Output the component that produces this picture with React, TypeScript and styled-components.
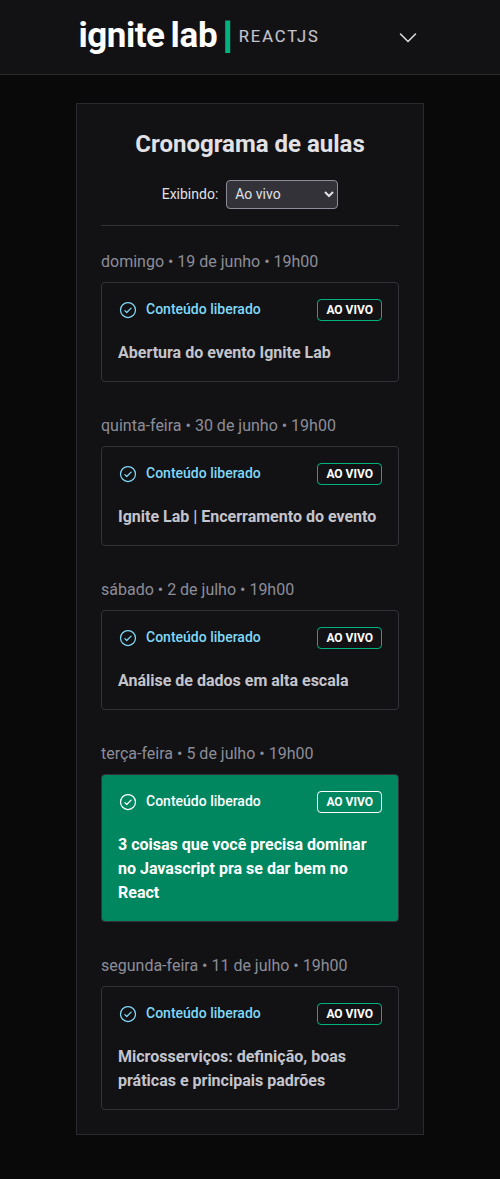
import React from "react";
import styled, { createGlobalStyle, css } from "styled-components";
import { PiCaretDown, PiCheckCircle } from "react-icons/pi";

const GlobalStyle = createGlobalStyle`
  *, *::before, *::after { box-sizing: border-box; margin: 0; padding: 0; }
  body {
    background: #09090a;
    color: #e1e1e6;
    font-family: Roboto, sans-serif;
    font-size: 16px;
    line-height: 24px;
  }
`;

const Page = styled.div`
  min-height: 1179px;
`;

const Header = styled.header`
  display: flex;
  align-items: center;
  justify-content: space-between;
  height: 75px;
  padding: 0 80px 0 76px;
  background: #121214;
  border-bottom: 1px solid #29292e;
`;

const Brand = styled.div`
  display: flex;
  align-items: center;
`;

const Logo = styled.svg`
  display: block;
  width: 248px;
  height: 48px;
  overflow: visible;
`;

const MenuButton = styled.button`
  display: flex;
  border: 0;
  background: transparent;
  color: #e1e1e6;
`;

const Panel = styled.main`
  width: 348px;
  margin: 28px auto 44px;
  padding: 24px;
  background: #121214;
  border: 1px solid #29292e;
`;

const Title = styled.h1`
  font-size: 24px;
  line-height: 32px;
  font-weight: 700;
  text-align: center;
`;

const Filter = styled.label`
  display: flex;
  align-items: center;
  justify-content: center;
  gap: 8px;
  margin-top: 20px;
  padding-bottom: 16px;
  border-bottom: 1px solid #323238;
  font-size: 14px;
  line-height: 20px;
`;

const FilterName = styled.span`
  padding-bottom: 2px;
`;

const Select = styled.select`
  width: 112px;
  height: 29px;
  padding: 0 4px 2px;
  background: #323238;
  border: 1px solid #8d8d99;
  border-radius: 4px;
  color: #e1e1e6;
  font: 14px/20px Roboto, sans-serif;
`;

const Lessons = styled.div`
  display: flex;
  flex-direction: column;
  gap: 32px;
  margin-top: 24px;
`;

const LessonDate = styled.time`
  display: block;
  color: #8d8d99;
`;

const Status = styled.span`
  display: flex;
  align-items: center;
  gap: 8px;
  padding-bottom: 2px;
  color: #81d8f7;
  font-size: 14px;
  line-height: 20px;
  font-weight: 500;

  svg { margin-top: 2px; }
`;

const Badge = styled.span`
  height: 22px;
  padding: 0 8px;
  border: 1px solid #00b37e;
  border-radius: 4px;
  color: #fff;
  font-size: 12px;
  line-height: 20px;
  font-weight: 700;
`;

const LessonTitle = styled.strong`
  display: block;
  margin-top: 20px;
  color: #c4c4cc;
  font-weight: 700;
`;

const Card = styled.article<{ $active?: boolean }>`
  margin-top: 8px;
  padding: 16px;
  border: 1px solid #323238;
  border-radius: 4px;

  ${({ $active }) =>
    $active &&
    css`
      background: #00875f;
      ${Status}, ${LessonTitle} { color: #fff; }
      ${Badge} { border-color: #fff; }
    `}
`;

const CardHeader = styled.header`
  display: flex;
  align-items: center;
  justify-content: space-between;
  height: 22px;
`;

const lessons = [
  { date: "domingo • 19 de junho • 19h00", title: "Abertura do evento Ignite Lab" },
  { date: "quinta-feira • 30 de junho • 19h00", title: "Ignite Lab | Encerramento do evento" },
  { date: "sábado • 2 de julho • 19h00", title: "Análise de dados em alta escala" },
  {
    date: "terça-feira • 5 de julho • 19h00",
    title: "3 coisas que você precisa dominar no Javascript pra se dar bem no React",
    active: true,
  },
  { date: "segunda-feira • 11 de julho • 19h00", title: "Microsserviços: definição, boas práticas e principais padrões" },
];

export default function App() {
  return (
    <Page>
      <GlobalStyle />
      <Header>
        <Brand>
          <Logo viewBox="0 0 248 48" role="img" aria-label="ignite lab ReactJS">
            <g fill="#fff" fontFamily="Roboto" fontSize="35" fontWeight="700">
              <text x="2.4" y="33.6" textLength="86.6">ignite</text>
              <text x="94.6" y="33.6" textLength="47.2">lab</text>
            </g>
            <rect x="149.2" y="7.5" width="5" height="32.5" fill="#00b37e" />
            <text
              x="162.8"
              y="29"
              fill="#c4c4cc"
              stroke="#c4c4cc"
              strokeWidth="0.15"
              fontFamily="Roboto"
              fontSize="16.5"
              textLength="79"
            >
              REACTJS
            </text>
          </Logo>
        </Brand>
        <MenuButton aria-label="Abrir menu">
          <PiCaretDown size={24} />
        </MenuButton>
      </Header>
      <Panel>
        <Title>Cronograma de aulas</Title>
        <Filter>
          <FilterName>Exibindo:</FilterName>
          <Select defaultValue="live">
            <option value="live">Ao vivo</option>
            <option value="all">Todas as aulas</option>
          </Select>
        </Filter>
        <Lessons>
          {lessons.map((lesson) => (
            <section key={lesson.title}>
              <LessonDate>{lesson.date}</LessonDate>
              <Card $active={lesson.active}>
                <CardHeader>
                  <Status>
                    <PiCheckCircle size={20} />
                    Conteúdo liberado
                  </Status>
                  <Badge>AO VIVO</Badge>
                </CardHeader>
                <LessonTitle>{lesson.title}</LessonTitle>
              </Card>
            </section>
          ))}
        </Lessons>
      </Panel>
    </Page>
  );
}
